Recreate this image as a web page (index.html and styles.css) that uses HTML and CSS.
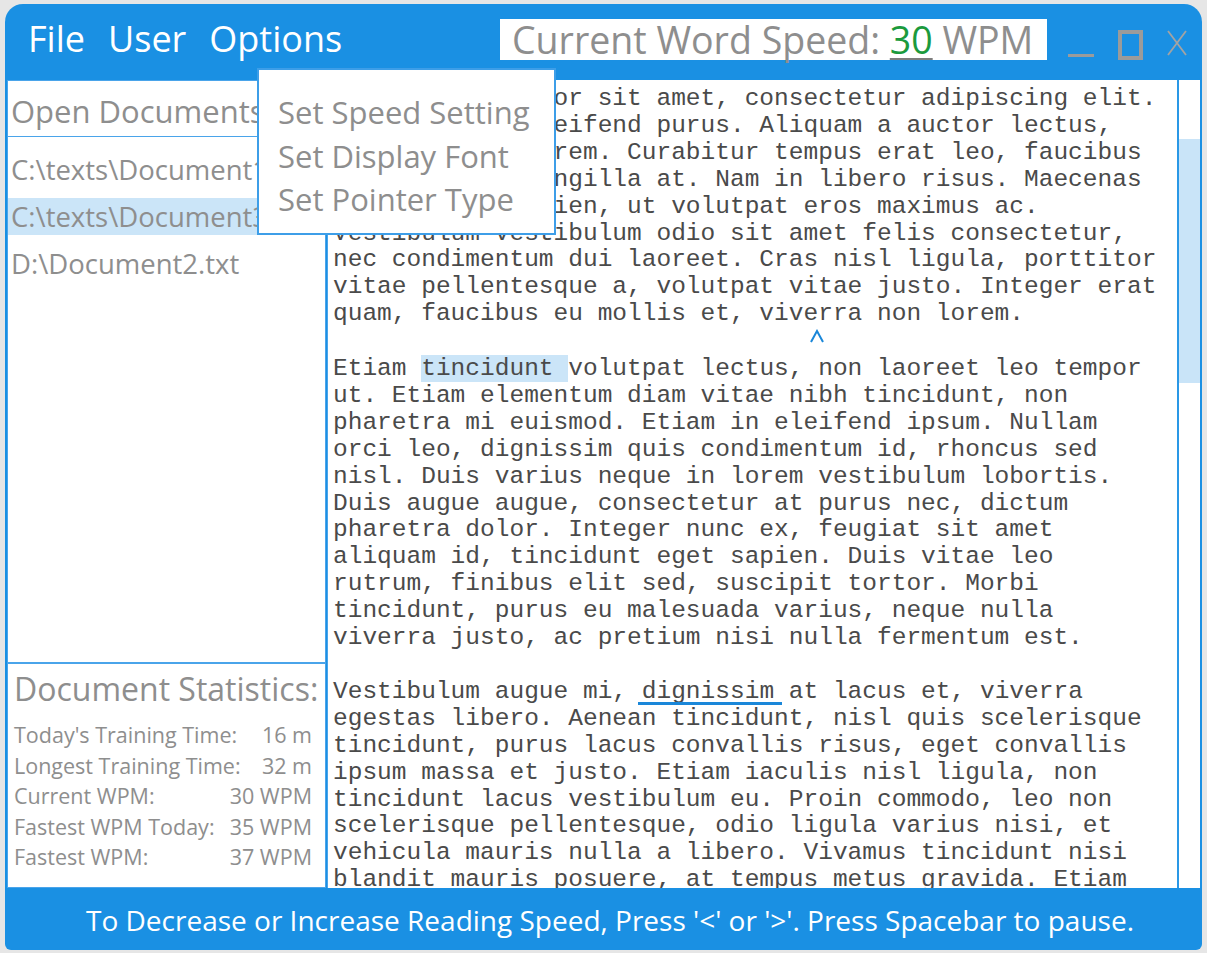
FILE: index.html
```html
<!DOCTYPE html>
<html>
<head>
<meta charset="utf-8">
<link rel="stylesheet" href="styles.css">
</head>
<body>
<div class="window">
  <header class="topbar">
    <nav class="menu"><span>File</span><span>User</span><span>Options</span></nav>
    <div class="speed">Current Word Speed: <span class="wpm">30</span> WPM</div>
    <svg class="controls" width="122" height="36" viewBox="0 0 122 36">
      <rect x="1" y="28" width="26" height="3" fill="#9b9b9b"/>
      <rect x="53" y="6" width="21" height="26" fill="none" stroke="#9b9b9b" stroke-width="4"/>
      <path d="M101 5 L119 29 M119 5 L101 29" stroke="#a3a3a3" stroke-width="1.8" fill="none"/>
    </svg>
  </header>
  <div class="main">
    <aside class="side">
      <div class="panel doc-head">Open Documents</div>
      <ul class="panel doc-list">
        <li>C:\texts\Document1.txt</li>
        <li class="sel">C:\texts\Document3.txt</li>
        <li>D:\Document2.txt</li>
      </ul>
      <section class="panel stats">
        <h2>Document Statistics:</h2>
        <div class="row"><span>Today's Training Time:</span><span>16 m</span></div>
        <div class="row"><span>Longest Training Time:</span><span>32 m</span></div>
        <div class="row"><span>Current WPM:</span><span>30 WPM</span></div>
        <div class="row"><span>Fastest WPM Today:</span><span>35 WPM</span></div>
        <div class="row"><span>Fastest WPM:</span><span>37 WPM</span></div>
      </section>
    </aside>
    <div class="reader">
<p class="para">Lorem ipsum dolor sit amet, consectetur adipiscing elit.
Phasellus ut eleifend purus. Aliquam a auctor lectus,
Praesent nec lorem. Curabitur tempus erat leo, faucibus
Nulla vitae fringilla at. Nam in libero risus. Maecenas
Morbi vitae sapien, ut volutpat eros maximus ac.
Vestibulum vestibulum odio sit amet felis consectetur,
nec condimentum dui laoreet. Cras nisl ligula, porttitor
vitae pellentesque a, volutpat vitae justo. Integer erat
quam, faucibus eu mollis et, viverra non lorem.</p>
<div class="gap"><svg class="caret" width="16" height="14" viewBox="0 0 16 14"><path d="M2 13 L8 2 L14 13" fill="none" stroke="#1a87d9" stroke-width="2"/></svg></div>
<p class="para">Etiam <span class="hl">tincidunt </span>volutpat lectus, non laoreet leo tempor
ut. Etiam elementum diam vitae nibh tincidunt, non
pharetra mi euismod. Etiam in eleifend ipsum. Nullam
orci leo, dignissim quis condimentum id, rhoncus sed
nisl. Duis varius neque in lorem vestibulum lobortis.
Duis augue augue, consectetur at purus nec, dictum
pharetra dolor. Integer nunc ex, feugiat sit amet
aliquam id, tincidunt eget sapien. Duis vitae leo
rutrum, finibus elit sed, suscipit tortor. Morbi
tincidunt, purus eu malesuada varius, neque nulla
viverra justo, ac pretium nisi nulla fermentum est.</p>
<div class="gap"></div>
<p class="para">Vestibulum augue mi, <span class="ul">dignissim</span> at lacus et, viverra
egestas libero. Aenean tincidunt, nisl quis scelerisque
tincidunt, purus lacus convallis risus, eget convallis
ipsum massa et justo. Etiam iaculis nisl ligula, non
tincidunt lacus vestibulum eu. Proin commodo, leo non
scelerisque pellentesque, odio ligula varius nisi, et
vehicula mauris nulla a libero. Vivamus tincidunt nisi
blandit mauris posuere, at tempus metus gravida. Etiam</p>
    </div>
    <div class="scrollbar"><div class="thumb"></div></div>
  </div>
  <footer class="footer">To Decrease or Increase Reading Speed, Press '&lt;' or '&gt;'. Press Spacebar to pause.</footer>
  <ul class="dropdown">
    <li>Set Speed Setting</li>
    <li>Set Display Font</li>
    <li>Set Pointer Type</li>
  </ul>
</div>
</body>
</html>
```
FILE: styles.css
```css
html, body {
  margin: 0;
  padding: 0;
  background: #e6e6e6;
}
body {
  width: 1207px;
  height: 953px;
  overflow: hidden;
  font-family: "Open Sans", "Noto Sans", sans-serif;
}
.window {
  position: relative;
  margin: 4px 0 0 5px;
  width: 1197px;
  height: 946px;
  background: #1a90e3;
  border-radius: 18px 18px 6px 6px;
  overflow: hidden;
  display: flex;
  flex-direction: column;
}
.topbar {
  height: 74px;
  flex: none;
  display: flex;
  align-items: flex-start;
}
.menu {
  display: flex;
  gap: 23px;
  padding: 10px 0 0 23px;
  color: #fff;
  font-size: 36px;
  line-height: 50px;
}
.speed {
  margin: 15px 0 0 auto;
  width: 535px;
  height: 41px;
  background: #fff;
  color: #8e8e8e;
  font-size: 37.5px;
  line-height: 41px;
  padding-left: 12px;
  white-space: nowrap;
}
.wpm {
  color: #1b9a3d;
  text-decoration: underline;
  text-decoration-color: #7d7d7d;
  text-decoration-thickness: 2px;
  text-underline-offset: 4px;
}
.controls {
  margin: 22px 13px 0 20px;
  flex: none;
}
.main {
  flex: 1;
  display: flex;
  padding: 2px 2px 0 2px;
  min-height: 0;
}
.side {
  width: 319px;
  flex: none;
  display: flex;
  flex-direction: column;
  margin-right: 1px;
}
.panel {
  background: #fff;
  border: 1px solid #4aa4ea;
  margin: 0;
  box-sizing: border-box;
}
.doc-head {
  height: 57px;
  color: #8e8e8e;
  font-size: 31px;
  line-height: 53px;
  padding: 4px 0 0 3px;
  white-space: nowrap;
  overflow: hidden;
}
.doc-list {
  flex: 1;
  list-style: none;
  padding: 14px 0 0 0;
  border-top: none;
  overflow: hidden;
}
.doc-list li {
  height: 37px;
  line-height: 37px;
  margin-bottom: 10px;
  padding-left: 3px;
  color: #8e8e8e;
  font-size: 27.5px;
  white-space: nowrap;
}
.doc-list li.sel {
  background: #cbe5f8;
}
.stats {
  height: 225px;
  flex: none;
  padding: 5px 13px 0 6px;
  color: #8e8e8e;
}
.stats h2 {
  margin: 0 0 11px 0;
  font-weight: normal;
  font-size: 32px;
  line-height: 40px;
  white-space: nowrap;
}
.stats .row {
  display: flex;
  justify-content: space-between;
  font-size: 21.5px;
  line-height: 30.5px;
  white-space: nowrap;
}
.reader {
  flex: 1;
  background: #fff;
  border-left: 1px solid #4aa4ea;
  padding: 6px 0 0 5px;
  overflow: hidden;
  font-family: "Liberation Mono", "Courier New", monospace;
  font-size: 24.5px;
  line-height: 26.9px;
  color: #4a4a4a;
}
.para {
  margin: 0;
  white-space: pre;
}
.gap {
  height: 26.9px;
}
.caret {
  display: block;
  margin: 1px 0 0 476px;
}
.hl {
  background: #cbe5f8;
}
.ul {
  position: relative;
}
.ul::after {
  content: "";
  position: absolute;
  left: -4px;
  right: -8px;
  bottom: 0;
  height: 3px;
  background: #1a87d9;
}
.scrollbar {
  width: 21px;
  flex: none;
  background: #fff;
  border-left: 2px solid #2a98e6;
}
.thumb {
  margin-top: 59px;
  height: 244px;
  background: #c9e4f8;
}
.footer {
  height: 62px;
  flex: none;
  color: #fff;
  font-size: 28px;
  line-height: 64px;
  padding-left: 13px;
  text-align: center;
  white-space: nowrap;
}
.dropdown {
  position: absolute;
  left: 252px;
  top: 64px;
  width: 299px;
  height: 167px;
  box-sizing: border-box;
  margin: 0;
  padding: 21px 0 0 19px;
  list-style: none;
  background: #fff;
  border: 2px solid #3d9ee8;
  color: #8e8e8e;
  font-size: 31px;
  line-height: 43.5px;
  white-space: nowrap;
}
```
